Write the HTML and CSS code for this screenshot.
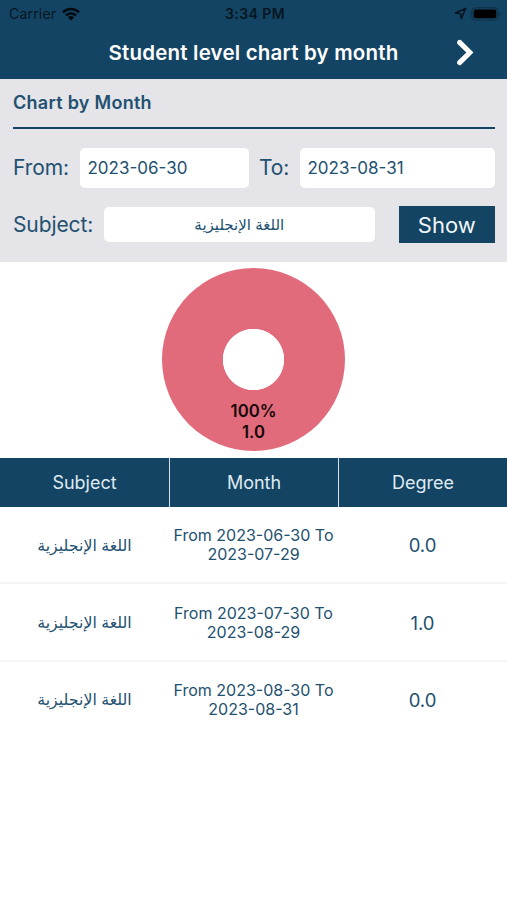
FILE: index.html
```html
<!DOCTYPE html>
<html lang="en">
<head>
<meta charset="utf-8">
<title>Student level chart by month</title>
<link rel="stylesheet" href="styles.css">
</head>
<body>
<header class="top">
  <div class="status">
    <div class="status-left"><span class="carrier">Carrier</span>
      <svg class="wifi" width="18" height="14" viewBox="0 0 18 14"><g fill="none" stroke="#030b12" stroke-width="2.5"><path d="M1 5.3a11.3 11.3 0 0 1 16 0"/><path d="M4 8.5a7 7 0 0 1 10 0"/></g><path fill="#030b12" d="M9 13.6 5.8 10.3a4.5 4.5 0 0 1 6.4 0z"/></svg>
    </div>
    <time class="clock">3:34 PM</time>
    <div class="status-right">
      <svg width="13" height="13" viewBox="0 0 12 12"><path d="M10.7 1.3 1.3 5.6l4.6.6.8 4.5z" fill="none" stroke="#071522" stroke-width="1.5" stroke-linejoin="round"/></svg>
      <svg width="30" height="14" viewBox="0 0 30 14"><rect x=".9" y=".8" width="26" height="12.2" rx="3.8" fill="none" stroke="#0e3048" stroke-width="1.2"/><rect x="2.7" y="2.5" width="22.6" height="8.8" rx="2.2" fill="#000"/><path d="M28.2 5v4q1.3-.6 1.3-2t-1.3-2" fill="#0e3048"/></svg>
    </div>
  </div>
  <div class="titlebar">
    <h1 class="title">Student level chart by month</h1>
    <svg class="next" width="18" height="28" viewBox="0 0 18 28"><path d="M3.6 3.4 13.9 13.5 3.6 23.6" fill="none" stroke="#fff" stroke-width="5" stroke-linecap="round"/></svg>
  </div>
</header>
<section class="filters">
  <h2 class="heading">Chart by Month</h2>
  <div class="row dates">
    <span class="label from">From:</span><div class="field date">2023-06-30</div>
    <span class="label to">To:</span><div class="field date end">2023-08-31</div>
  </div>
  <div class="row subject-row">
    <span class="label subject">Subject:</span><div class="field choice" lang="ar" dir="rtl">اللغة الإنجليزية</div>
    <button class="show">Show</button>
  </div>
</section>
<section class="chart">
  <div class="donut"><div class="value"><span class="percent">100%</span><span class="amount">1.0</span></div></div>
</section>
<section class="table">
  <div class="line head"><div>Subject</div><div>Month</div><div>Degree</div></div>
  <div class="line entry"><div class="ar" lang="ar" dir="rtl">اللغة الإنجليزية</div><div class="month">From 2023-06-30 To<br>2023-07-29</div><div class="degree">0.0</div></div>
  <div class="line entry"><div class="ar" lang="ar" dir="rtl">اللغة الإنجليزية</div><div class="month">From 2023-07-30 To<br>2023-08-29</div><div class="degree">1.0</div></div>
  <div class="line entry"><div class="ar" lang="ar" dir="rtl">اللغة الإنجليزية</div><div class="month">From 2023-08-30 To<br>2023-08-31</div><div class="degree">0.0</div></div>
</section>
</body>
</html>
```
FILE: styles.css
```css
* { box-sizing: border-box; }
body { margin: 0; width: 507px; height: 900px; overflow: hidden; background: #fff; color: #22506f; font-family: Inter, "DejaVu Sans", sans-serif; }
svg { display: block; flex: none; }
.top { height: 79px; background: #144463; }
.status { height: 27px; display: grid; grid-template-columns: 1fr auto 1fr; align-items: center; padding: 0 6px 0 9px; color: #061622; font-size: 14px; }
.status-left, .status-right { display: flex; align-items: center; }
.status-left { gap: 6px; }
.status-right { justify-content: flex-end; gap: 4px; }
.carrier { letter-spacing: .2px; }
.clock { font-weight: 600; letter-spacing: .45px; }
.titlebar { height: 52px; display: grid; grid-template-columns: 1fr auto 1fr; align-items: center; }
.title { grid-column: 2; margin: 0; color: #fff; font-size: 20.5px; font-weight: 600; letter-spacing: .19px; line-height: 52px; white-space: nowrap; }
.next { justify-self: end; margin-right: 33px; }
.filters { height: 182.5px; padding: 0 12.5px 0 13px; background: #e4e4e9; }
.heading { margin: 0; height: 49.5px; border-bottom: 2.5px solid #144463; font-size: 18px; letter-spacing: .28px; line-height: 48px; font-weight: 600; }
.row { display: flex; align-items: center; }
.dates { height: 40px; margin-top: 19px; }
.subject-row { height: 37px; margin-top: 18.5px; }
.label { font-size: 21px; letter-spacing: -.1px; white-space: nowrap; flex: none; }
.from { width: 66.5px; }
.to { width: 51px; padding-left: 10.5px; }
.subject { width: 91px; }
.field { background: #fff; border-radius: 5px; height: 40px; line-height: 40px; font-size: 17px; flex: none; }
.date { width: 169px; padding-left: 8px; }
.end { width: 195px; }
.choice { width: 270.5px; height: 35.5px; line-height: 36px; text-align: center; font-size: 15px; }
.show { margin-left: auto; width: 95.5px; height: 37px; padding: 0; border: 0; background: #144463; color: #f1f6f9; font: 22px Inter, sans-serif; }
.chart { height: 196.5px; display: flex; justify-content: center; padding-top: 6px; }
.donut { width: 183.5px; height: 183.5px; border-radius: 50%; background: radial-gradient(circle, #fff 30.3px, #e16a7b 31px); display: flex; justify-content: center; align-items: flex-end; padding-bottom: 8.5px; }
.value { display: flex; flex-direction: column; align-items: center; color: #16070a; font-size: 16.7px; line-height: 21px; font-weight: 600; }
.line { display: grid; grid-template-columns: repeat(3, 1fr); text-align: center; align-items: center; }
.head { height: 49px; background: #144463; color: #dfeaf2; font-size: 18px; }
.head > div { height: 49px; line-height: 50px; }
.head > div + div { border-left: 1.5px solid #d7e0e7; }
.entry { height: 77.3px; padding-top: 1.5px; border-bottom: 2px solid #f5f5f6; }
.entry:last-child { border-bottom-color: transparent; }
.ar { font-size: 15.8px; }
.month { font-size: 16px; line-height: 19px; }
.degree { font-size: 18.5px; }
```
